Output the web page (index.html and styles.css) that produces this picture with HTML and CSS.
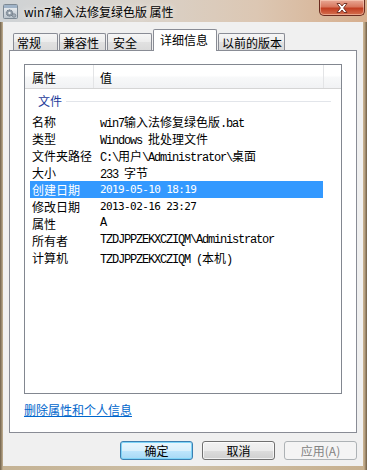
FILE: index.html
```html
<!DOCTYPE html>
<html>
<head>
<meta charset="utf-8">
<link rel="stylesheet" href="styles.css">
</head>
<body>
<div class="window">
  <div class="titlebar">
    <svg class="appicon" width="15" height="15" viewBox="0 0 15 15">
      <defs>
        <linearGradient id="ig" x1="0" y1="0" x2="0" y2="1">
          <stop offset="0" stop-color="#f4f6f8"/>
          <stop offset="1" stop-color="#b9c3cc"/>
        </linearGradient>
      </defs>
      <rect x="0.5" y="0.5" width="14" height="14" rx="1" fill="url(#ig)" stroke="#7d8994"/>
      <rect x="1" y="1" width="13" height="3" fill="#9fb3c8"/>
      <circle cx="6.5" cy="9" r="3.2" fill="#8e9aa6" stroke="#5f6b76" stroke-width="0.8" stroke-dasharray="1.2 0.8"/>
      <circle cx="6.5" cy="9" r="1.2" fill="#e8ecef"/>
      <circle cx="11" cy="11.5" r="1.8" fill="#a4aeb8" stroke="#66727d" stroke-width="0.6"/>
    </svg>
    <span class="title">win7输入法修复绿色版 属性</span>
    <div class="close">
      <svg width="16" height="12" viewBox="0 0 16 12">
        <path d="M3 1.5 L6 1.5 L8 4 L10 1.5 L13 1.5 L9.6 6 L13 10.5 L10 10.5 L8 8 L6 10.5 L3 10.5 L6.4 6 Z" fill="#ffffff" stroke="#6a2a1e" stroke-width="0.9" stroke-linejoin="round"/>
      </svg>
    </div>
  </div>
  <div class="client">
    <div class="tabs">
      <div class="tab w1">常规</div>
      <div class="tab w2">兼容性</div>
      <div class="tab w3">安全</div>
      <div class="tab sel w4">详细信息</div>
      <div class="tab w5">以前的版本</div>
    </div>
    <div class="panel">
      <div class="list">
        <div class="lhead">
          <div class="hc c1">属性</div>
          <div class="hc c2">值</div>
          <div class="hc c3"></div>
        </div>
        <div class="group"><span class="gtext">文件</span><i class="gline"></i></div>
        <div class="row"><span class="k">名称</span><span class="v">win7<span class="cj">输入法修复绿色版</span>.bat</span></div>
        <div class="row"><span class="k">类型</span><span class="v">Windows <span class="cj">批处理文件</span></span></div>
        <div class="row"><span class="k">文件夹路径</span><span class="v">C:\<span class="cj">用户</span>\Administrator\<span class="cj">桌面</span></span></div>
        <div class="row"><span class="k">大小</span><span class="v">233 <span class="cj">字节</span></span></div>
        <div class="row hi"><span class="k">创建日期</span><span class="v d">2019-05-10 18:19</span></div>
        <div class="row"><span class="k">修改日期</span><span class="v d">2013-02-16 23:27</span></div>
        <div class="row"><span class="k">属性</span><span class="v">A</span></div>
        <div class="row"><span class="k">所有者</span><span class="v">TZDJPPZEKXCZIQM\Administrator</span></div>
        <div class="row"><span class="k">计算机</span><span class="v">TZDJPPZEKXCZIQM (<span class="cj">本机</span>)</span></div>
      </div>
      <a class="link" href="#">删除属性和个人信息</a>
    </div>
    <div class="buttons">
      <div class="btn def">确定</div>
      <div class="btn">取消</div>
      <div class="btn dis">应用(A)</div>
    </div>
  </div>
</div>
</body>
</html>
```
FILE: styles.css
```css
html, body {
  margin: 0;
  padding: 0;
}
body {
  width: 367px;
  height: 470px;
  overflow: hidden;
  font-family: "Noto Sans CJK SC", "Noto Sans", sans-serif;
  font-size: 12px;
  color: #000;
}
.window {
  width: 367px;
  height: 470px;
  display: flex;
  flex-direction: column;
  background: linear-gradient(90deg, #6f604a 0, #c4b294 3px, #cdbfa6 50%, #c7b08f 364px, #6f5d45 367px);
}
.titlebar {
  height: 22px;
  display: flex;
  align-items: flex-start;
  background: linear-gradient(90deg, #cfd3d6 0, #d9d3cb 35%, #dcc7b3 70%, #d6ae8d 100%);
  box-sizing: border-box;
  padding-left: 3px;
}
.appicon {
  margin-top: 4px;
  flex: none;
}
.title {
  margin-left: 6px;
  line-height: 16px;
  margin-top: 4px;
  white-space: nowrap;
  color: #000;
  text-shadow: 0 0 6px rgba(255,255,255,0.9);
}
.close {
  margin-left: auto;
  margin-right: 2px;
  width: 46px;
  height: 16px;
  box-sizing: border-box;
  border: 1px solid #6b2b1f;
  border-top: none;
  border-radius: 0 0 5px 5px;
  background: linear-gradient(#e9a895 0, #d8775e 45%, #c23e22 55%, #d4704f 100%);
  box-shadow: inset 0 0 0 1px rgba(255,220,200,0.5);
  display: flex;
  align-items: center;
  justify-content: center;
}
.client {
  flex: 1;
  margin: 0 4px 4px 3px;
  background: #f0f0f0;
  display: flex;
  flex-direction: column;
  padding: 7px 6px 0 6px;
  box-sizing: border-box;
  min-height: 0;
}
.tabs {
  height: 22px;
  margin-bottom: -1px;
  padding-left: 4px;
  display: flex;
  align-items: flex-start;
  position: relative;
  z-index: 1;
}
.tab {
  box-sizing: border-box;
  height: 17px;
  margin-top: 4px;
  margin-right: 1px;
  border: 1px solid #898c95;
  border-bottom: none;
  border-radius: 2px 2px 0 0;
  background: linear-gradient(#f6f6f6 0, #ececec 50%, #e1e1e1 51%, #dadada 100%);
  line-height: 15px;
  padding-top: 1px;
  padding-left: 3px;
  white-space: nowrap;
}
.tab.sel {
  height: 22px;
  margin-top: 0;
  background: #fff;
  padding-top: 2px;
  padding-left: 6px;
}
.w1 { width: 45px; }
.w2 { width: 47px; }
.w3 { width: 45px; padding-left: 5px; }
.w4 { width: 64px; }
.w5 { width: 67px; }
.panel {
  flex: 1;
  background: #fff;
  border: 1px solid #898c95;
  padding: 13px 14px 0 14px;
  display: flex;
  flex-direction: column;
  min-height: 0;
}
.list {
  height: 330px;
  box-sizing: border-box;
  border: 1px solid #828790;
  background: #fff;
  flex: none;
}
.lhead {
  height: 24px;
  box-sizing: border-box;
  border-bottom: 1px solid #d5d5d5;
  display: flex;
  background: linear-gradient(#ffffff 0, #ffffff 45%, #f7f8f9 55%, #f1f2f4 100%);
}
.hc {
  box-sizing: border-box;
  height: 23px;
  line-height: 16px;
  padding-top: 5px;
}
.c1 {
  width: 69px;
  padding-left: 7px;
  border-right: 1px solid #e3e4e6;
}
.c2 {
  width: 230px;
  padding-left: 6px;
  border-right: 1px solid #e3e4e6;
}
.c3 {
  flex: 1;
}
.group {
  height: 24px;
  display: flex;
  align-items: center;
  padding-left: 13px;
  box-sizing: border-box;
}
.gtext {
  color: #1e3c9a;
  line-height: 16px;
}
.gline {
  flex: 1;
  height: 1px;
  background: #e2e5ea;
  margin-left: 4px;
  margin-right: 10px;
}
.row {
  height: 17px;
  line-height: 17px;
  margin-left: 5px;
  width: 293px;
  display: flex;
  white-space: nowrap;
}
.row.hi {
  background: #3399ff;
  color: #fff;
}
.k {
  width: 70px;
  box-sizing: border-box;
  padding-left: 2px;
  flex: none;
}
.v {
  font-family: "Liberation Mono", "Noto Sans CJK SC", monospace;
  font-size: 12px;
  letter-spacing: -1.2px;
}
.v .cj {
  font-family: "Noto Sans CJK SC", sans-serif;
  font-size: 12px;
  letter-spacing: 0;
}
.v.d {
  font-family: "DejaVu Sans Mono", monospace;
  font-size: 11px;
  letter-spacing: -0.6px;
}
.link {
  margin-top: 8px;
  align-self: flex-start;
  color: #0066cc;
  text-decoration: underline;
  line-height: 16px;
}
.buttons {
  height: 33px;
  flex: none;
  box-sizing: border-box;
  padding-top: 8px;
  display: flex;
  justify-content: flex-end;
  gap: 9px;
}
.btn {
  width: 73px;
  height: 19px;
  box-sizing: border-box;
  border: 1px solid #707070;
  border-radius: 3px;
  background: linear-gradient(#f2f2f2 0, #ebebeb 50%, #dddddd 51%, #cfcfcf 100%);
  box-shadow: inset 0 0 0 1px rgba(255,255,255,0.7);
  text-align: center;
  line-height: 17px;
}
.btn.def {
  border-color: #3c7fb1;
  background: linear-gradient(#eaf6fd 0, #d9f0fc 50%, #bee6fd 51%, #a7d9f5 100%);
  box-shadow: inset 0 0 0 1px #7fd4f7;
}
.btn.dis {
  border-color: #adb2b5;
  background: #f4f4f4;
  color: #838383;
  box-shadow: none;
}
```
